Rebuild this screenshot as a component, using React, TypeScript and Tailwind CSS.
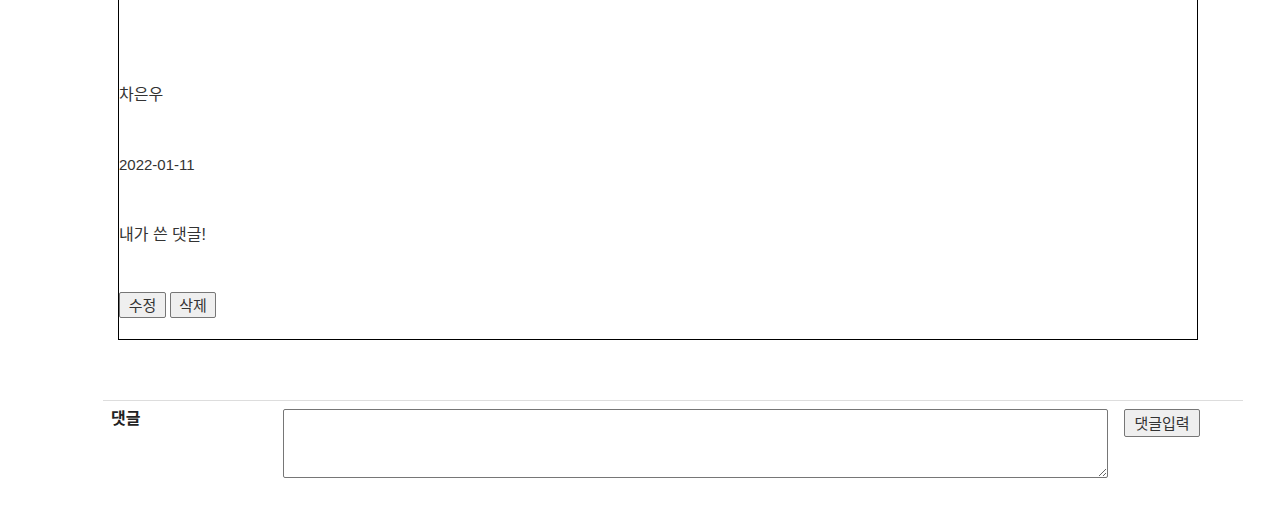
import React from 'react';

const App: React.FC = () => {
    return (
        <div className="min-h-[506px] bg-white text-[#333] font-['Liberation_Sans','Noto_Sans_CJK_KR',sans-serif] text-base">
            {/* 댓글 목록 박스 (위쪽은 스크롤로 잘림) */}
            <div className="ml-[118px] w-[1080px] border border-t-0 border-black pt-[86px] pb-[21px]">
                <p className="leading-[18px]">차은우</p>
                <p className="mt-[52px] text-[15px] leading-[18px]">2022-01-11</p>
                <p className="mt-[52px] leading-[18px]">내가 쓴 댓글!</p>
                <div className="mt-[48px] flex gap-[4px]">
                    <button className="h-[26px] w-[47px] rounded-[2px] border border-[#767676] bg-[#efefef] text-[15px] leading-none text-[#333]">수정</button>
                    <button className="h-[26px] w-[46px] rounded-[2px] border border-[#767676] bg-[#efefef] text-[15px] leading-none text-[#333]">삭제</button>
                </div>
            </div>

            {/* 댓글 입력 */}
            <div className="mt-[60px] ml-[103px] w-[1140px] border-t border-[#ddd] pt-2 flex items-start">
                <div className="w-[180px] pl-2 font-bold leading-5 text-[#222]">댓글</div>
                <textarea className="h-[69px] w-[825px] rounded-[2px] border border-[#767676] bg-white" />
                <button className="ml-4 h-[28px] w-[76px] rounded-[2px] border border-[#767676] bg-[#efefef] text-[15px] leading-none text-[#333]">댓글입력</button>
            </div>
        </div>
    );
};

export default App;
